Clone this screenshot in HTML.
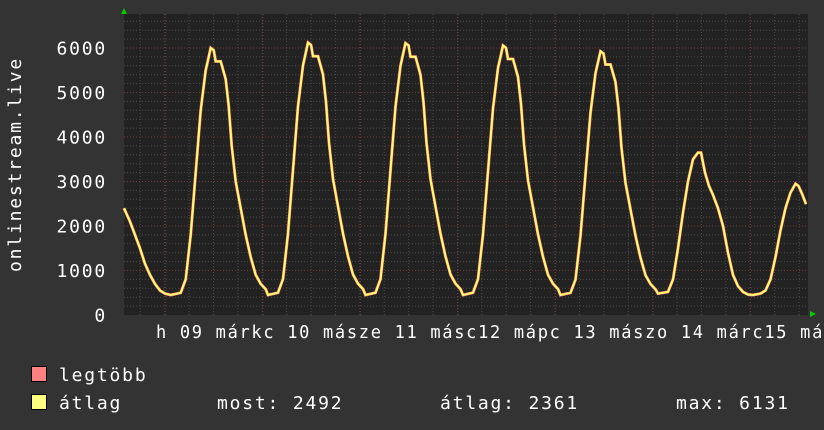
<!DOCTYPE html>
<html><head><meta charset="utf-8"><style>
html,body{margin:0;padding:0;background:#333;}
svg{display:block}
text{font-family:"DejaVu Sans Mono","Liberation Mono",monospace;font-size:18px;fill:#fff;letter-spacing:1.8px}
</style></head><body>
<svg width="824" height="430" viewBox="0 0 824 430" xmlns="http://www.w3.org/2000/svg">
<rect width="824" height="430" fill="#333"/>
<rect x="124" y="14" width="684" height="301" fill="#222"/>
<g id="grid"></g>
<polygon points="121,14 127,14 124,8" fill="#0c0"/>
<polygon points="810,311 810,317 816,314" fill="#0c0"/>
<g id="ylab"></g>
<text transform="translate(21,272) rotate(-90)" textLength="215" lengthAdjust="spacingAndGlyphs">onlinestream.live</text>
<text x="156" y="338" textLength="668" lengthAdjust="spacingAndGlyphs">h 09 márkc 10 másze 11 másc12 mápc 13 mászo 14 márc15 má</text>
<rect x="31.5" y="366.5" width="15" height="15" fill="#ff8080" stroke="#000"/>
<rect x="31.5" y="394.5" width="15" height="15" fill="#ffff80" stroke="#000"/>
<text x="59" y="381">legtöbb</text>
<text x="59" y="409">átlag</text>
<text x="217" y="409">most: 2492</text>
<text x="440" y="409">átlag: 2361</text>
<text x="676" y="409">max: 6131</text>
<path id="pmax" fill="none" stroke="#ff7070" stroke-width="3"/>
<path id="pavg" fill="none" stroke="#ffff70" stroke-width="2"/>
</svg>
<script>
var g=document.getElementById('grid'),s='';
function Y(v){return 315-v*0.0445;}
for(var v=200;v<6700;v+=200){var y=Y(v);if(y<14)break;var maj=v%1000==0;
s+='<line x1="124" x2="808" y1="'+y+'" y2="'+y+'" stroke="'+(maj?'#6a3a3a':'#4a4a4a')+'" stroke-dasharray="1,2"/>';}
var days=[165.7,263,360.5,458,555.5,653,750.5];
for(var x=124+16.25;x<808;x+=24.4){s+='<line y1="14" y2="315" x1="'+x+'" x2="'+x+'" stroke="#4a4a4a" stroke-dasharray="1,2"/>';}
days.forEach(function(d){s+='<line y1="14" y2="315" x1="'+d+'" x2="'+d+'" stroke="#6a3a3a" stroke-dasharray="1,2"/>';});
g.innerHTML=s;
var yl='';for(var k=0;k<=6;k++){yl+='<text x="107" y="'+(Y(k*1000)+6.5)+'" text-anchor="end">'+(k*1000)+'</text>';}
document.getElementById('ylab').innerHTML=yl;
var shape=[[5,450],[15,500],[20,800],[25,1800],[30,3200],[35,4600],[40,5500],[45,6000],[48,5950],[50,5700],[55,5700],[60,5300],[63,4700],[66,3800],[70,3000],[75,2400],[80,1800],[85,1300],[90,900],[95,700],[100,580]];
var peaks=[6000,6130,6120,6060,5920];
var pts=[[124,2400],[130,2100],[135,1800],[140,1500],[145,1150],[150,900],[155,700],[160,550],[165,480]];
for(var i=0;i<5;i++){var d=days[i],f=peaks[i]/6000;shape.forEach(function(p){pts.push([d+p[0],450+(p[1]-450)*f]);});}
var d5=days[5];
[[5,480],[15,520],[20,800],[25,1500],[30,2300],[35,3000],[40,3500],[45,3650],[48,3650],[52,3200],[56,2900],[60,2700],[65,2400],[70,2000],[75,1400],[80,900],[85,650],[90,520],[95,460],[100,450]].forEach(function(p){pts.push([d5+p[0],p[1]]);});
var d6=days[6];
[[5,460],[10,480],[15,550],[20,800],[25,1300],[30,1900],[35,2400],[40,2750],[45,2950],[48,2900],[52,2700],[55.5,2490]].forEach(function(p){pts.push([d6+p[0],p[1]]);});
var dd='M'+pts.map(function(p){return p[0].toFixed(1)+','+Y(p[1]).toFixed(1);}).join(' L');
document.getElementById('pmax').setAttribute('d',dd);
document.getElementById('pavg').setAttribute('d',dd);
</script>
</body></html>
